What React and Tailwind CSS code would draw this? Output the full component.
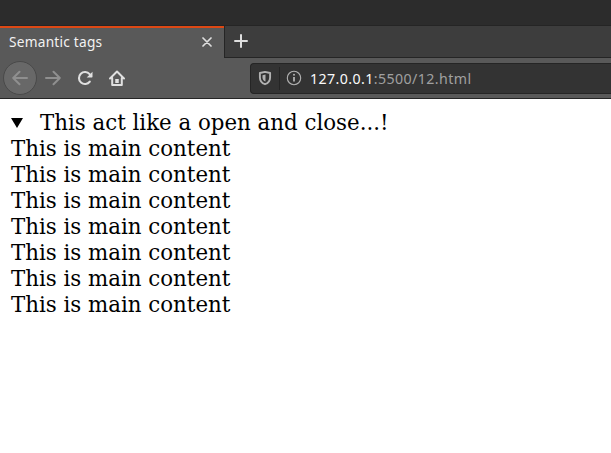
function TabStrip() {
  return (
    <div className="flex h-[33px] shrink-0 bg-[#3d3d3d]">
      <div className="flex w-[224px] flex-col bg-[#595959]">
        <div className="h-px bg-[#252525]" />
        <div className="h-[2px] bg-[#dd4814]" />
        <div className="flex h-[28px] items-center justify-between pl-[9px] pr-[12px]">
          <span className="whitespace-nowrap text-[13.7px] leading-4 tracking-[0.23px] text-[#f2f2f2]">Semantic tags</span>
          <svg className="h-[10px] w-[10px]" viewBox="0 0 10 10" fill="none" stroke="#dedede" strokeWidth="1.7" strokeLinecap="round" aria-label="Close tab">
            <path d="M1 1l8 8M9 1l-8 8" />
          </svg>
        </div>
      </div>
      <div className="flex grow border-b border-l border-t border-[#252525] pl-[9px] pt-[8px]">
        <svg className="h-[14px] w-[14px]" viewBox="0 0 14 14" fill="none" stroke="#dedede" strokeWidth="2" strokeLinecap="round" aria-label="New tab">
          <path d="M7 1v12M1 7h12" />
        </svg>
      </div>
    </div>
  );
}

function Arrow({ className }) {
  return (
    <svg className={className} viewBox="0 0 16 16" fill="none" stroke="#8f8f8f" strokeWidth="2" strokeLinecap="round" strokeLinejoin="round">
      <path d="M15 8H1.2M7.5 1.7L1.2 8l6.3 6.3" />
    </svg>
  );
}

function AddressBar() {
  return (
    <div className="ml-[125px] flex h-[31px] grow items-center rounded-l-[4px] border border-r-0 border-[#252525] bg-[#333333]">
      <svg className="ml-[6px] h-4 w-4" viewBox="0 0 16 16" fill="none">
        <path d="M8 1.900L2.900 3v4.500c0 3.400 1.800 5.600 5.100 6.700 3.300-1.100 5.100-3.300 5.100-6.700V3z" stroke="#b1b1b1" strokeWidth="1.900" strokeLinejoin="round" />
        <path d="M8.500 4.600v7C6.500 10.700 5.500 9.200 5.500 7.400V5.200z" fill="#b1b1b1" />
      </svg>
      <div className="ml-[6px] h-[23px] w-px bg-[#252525]" />
      <svg className="ml-[6px] h-4 w-4" viewBox="0 0 16 16" fill="none">
        <circle cx="8" cy="8" r="6.700" stroke="#b1b1b1" strokeWidth="1.100" />
        <circle cx="8" cy="4.800" r="1" fill="#b1b1b1" />
        <path d="M8 7v4.600" stroke="#b1b1b1" strokeWidth="1.800" />
      </svg>
      <span className="ml-[8px] whitespace-nowrap pt-px text-[14.2px] leading-5 tracking-[0.41px] text-[#a0a0a0]">
        <span className="text-[#fafafa]">127.0.0.1</span>:5500/12.html
      </span>
    </div>
  );
}

function Toolbar() {
  return (
    <div className="flex h-[41px] shrink-0 items-center border-b border-[#252525] bg-[#595959] pl-[3px]">
      <div className="flex h-[34px] w-[34px] items-center justify-center rounded-full border border-[#494949] bg-[#686868]">
        <Arrow className="h-4 w-4" />
      </div>
      <Arrow className="ml-[8px] h-4 w-4 rotate-180" />
      <svg className="ml-[16px] h-4 w-4" viewBox="0 0 16 16" fill="none">
        <path d="M12.800 11.600A6 6 0 1 1 12.600 4.200" stroke="#e0e0e0" strokeWidth="2.100" strokeLinecap="round" />
        <path d="M15.500 1.700v5.100a.7.7 0 0 1-.7.7H9.700z" fill="#e0e0e0" />
      </svg>
      <svg className="ml-[16px] h-4 w-4" viewBox="0 0 16 16" fill="none" stroke="#e0e0e0" strokeWidth="2" strokeLinejoin="round" strokeLinecap="round">
        <path d="M1 8.500L8 1.500l7 7M3.200 8v7h9.600V8" />
        <path d="M8 13V9" strokeWidth="3.500" strokeLinecap="butt" />
      </svg>
      <AddressBar />
    </div>
  );
}

const lines = Array(7).fill("This is main content");

export default function App() {
  return (
    <div className="flex h-[453px] w-[611px] flex-col overflow-hidden bg-white font-['Noto_Sans',sans-serif]">
      <div className="h-[25px] shrink-0 bg-[#2c2c2c]" />
      <TabStrip />
      <Toolbar />
      <main className="flex flex-col pl-[11px] pt-[11px] font-['DejaVu_Serif',serif] text-[21.33px] leading-[26px] text-black">
        <div className="flex items-center">
          <svg className="h-[10px] w-[12px]" viewBox="0 0 12 10">
            <path d="M0 0h12L6 10z" />
          </svg>
          <span className="ml-[17px] whitespace-nowrap">This act like a open and close...!</span>
        </div>
        {lines.map((line, i) => (
          <p key={i} className="whitespace-nowrap">{line}</p>
        ))}
      </main>
    </div>
  );
}
